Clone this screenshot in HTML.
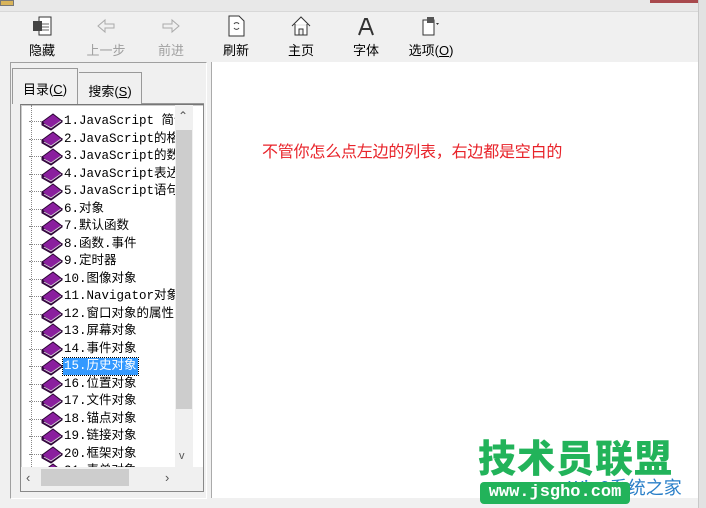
<!DOCTYPE html>
<html><head><meta charset="utf-8">
<style>
*{margin:0;padding:0;box-sizing:border-box}
body{width:706px;height:508px;overflow:hidden;background:#f0f0f0;position:relative;font-family:"Liberation Sans","Noto Sans CJK SC",sans-serif;font-size:13px;color:#000}
.abs{position:absolute}
.title{left:0;top:0;width:706px;height:12px;background:#e8e8e8;border-bottom:1px solid #d8d8d8}
.tb{top:15px;text-align:center;width:50px;font-size:13px}
.tb svg{display:block;margin:0 auto 3px}
.dis{color:#a0a0a0}
.left{left:10px;top:62px;width:197px;height:437px;border:1px solid #a0a0a0;border-right-color:#fff;border-bottom-color:#fff;background:#f0f0f0}
.tab{top:72px;height:32px;border:1px solid #999;border-bottom:none;background:#f0f0f0;font-size:13px;padding:6px 0 0 0;text-align:center}
.tree{left:20px;top:104px;width:184px;height:388px;border:1px solid #888;border-top-color:#777;background:#fff;overflow:hidden;box-shadow:inset 1px 1px 0 #ccc}
.row{position:absolute;left:0;height:17px;white-space:nowrap;font-family:"Liberation Mono","Noto Sans CJK SC",monospace;font-size:12.5px;line-height:17px}
.row .d{position:absolute;left:8px;top:8px;width:14px;border-top:1px dotted #888}
.row .b{position:absolute;left:19px;top:0px;width:23px;height:18px}
.row .t{position:absolute;left:42px;top:0;padding:0 1px}
.sel{background:#3399ff;color:#fff;outline:1px dotted #000}
.right{left:211px;top:62px;width:487px;height:436px;background:#fff;border-left:1px solid #aaa}
</style></head><body>
<div class="abs title"></div>
<div class="abs" style="left:0;top:0;width:14px;height:6px;background:#d9b45a;border:1px solid #777"></div>
<div class="abs" style="left:650px;top:0;width:48px;height:3px;background:#a8494d"></div>
<div class="abs" style="left:698px;top:0;width:8px;height:508px;background:#e2e2e2;border-left:1px solid #c8c8c8"></div>

<div class="abs tb" style="left:17px"><svg width="22" height="22"><rect x="8" y="2" width="12" height="18" fill="#fff" stroke="#333"/><rect x="2" y="6" width="9" height="10" fill="#444"/><path d="M11 9h7M11 12h7M11 15h7" stroke="#666"/></svg>隐藏</div>
<div class="abs tb dis" style="left:81px"><svg width="22" height="22"><path d="M3 11l7-6v4h9v4h-9v4z" fill="none" stroke="#aaa"/></svg>上一步</div>
<div class="abs tb dis" style="left:146px"><svg width="22" height="22"><path d="M19 11l-7-6v4H3v4h9v4z" fill="none" stroke="#aaa"/></svg>前进</div>
<div class="abs tb" style="left:211px"><svg width="22" height="22"><path d="M4 1h10l5 5v15H4z" fill="#fff" stroke="#333"/><path d="M9 9a3 3 0 0 1 5 0M14 13a3 3 0 0 1-5 0" stroke="#444" fill="none"/></svg>刷新</div>
<div class="abs tb" style="left:276px"><svg width="22" height="22"><path d="M2 11L11 2l9 9M5 9v11h12V9M9 20v-6h4v6" fill="#fff" stroke="#333"/></svg>主页</div>
<div class="abs tb" style="left:341px"><svg width="22" height="22"><path d="M4 20L10 4h2l6 16M7 14h9" stroke="#333" stroke-width="2" fill="none"/></svg>字体</div>
<div class="abs tb" style="left:402px;width:58px"><svg width="22" height="22"><rect x="3" y="5" width="11" height="15" fill="#fff" stroke="#333"/><rect x="7" y="2" width="7" height="6" fill="#555"/><path d="M16 8l3 0-1.5 2z" fill="#333"/></svg>选项(<u>O</u>)</div>

<div class="abs left"></div>
<div class="abs tab" style="left:12px;top:68px;height:36px;width:66px;border-bottom:none;z-index:2;padding-top:10px">目录(<u>C</u>)</div>
<div class="abs tab" style="left:79px;width:63px;padding-top:8px;border-left:none">搜索(<u>S</u>)</div>
<div class="abs" style="left:142px;top:103px;width:62px;border-top:1px solid #999"></div>

<div class="abs tree">
<div class="abs" style="left:10px;top:0;height:384px;border-left:1px dotted #888"></div>
<div id="rows"></div>
<div class="abs" style="left:154px;top:0;width:18px;height:362px;background:#f0f0f0"></div>
<div class="abs" style="left:155px;top:25px;width:16px;height:279px;background:#cdcdcd"></div>
<div class="abs" style="left:157px;top:4px;font-size:12px;color:#555">⌃</div>
<div class="abs" style="left:158px;top:345px;font-size:11px;color:#555">v</div>
<div class="abs" style="left:0;top:362px;width:184px;height:24px;background:#f0f0f0"></div>
<div class="abs" style="left:20px;top:364px;width:88px;height:17px;background:#cdcdcd"></div>
<div class="abs" style="left:5px;top:365px;font-size:13px;color:#555">‹</div>
<div class="abs" style="left:144px;top:365px;font-size:13px;color:#555">›</div>
</div>

<div class="abs right"></div>
<div class="abs" style="left:262px;top:138px;color:#e8232a;font-size:16px;letter-spacing:-0.2px;font-family:'Noto Sans CJK SC',sans-serif">不管你怎么点左边的列表，右边都是空白的</div>

<div class="abs" style="left:478px;top:436px;font-size:38px;font-weight:900;color:#22b35a;letter-spacing:1px;line-height:40px;font-family:'Noto Sans CJK SC',sans-serif">技术员联盟</div>
<div class="abs" style="left:568px;top:474px;font-size:18px;color:#2a7fc8;font-family:'Noto Sans CJK SC',sans-serif">Win8系统之家</div>
<div class="abs" style="left:480px;top:482px;width:150px;height:22px;background:#22b35a;border-radius:4px;color:#fff;font-family:'Liberation Mono',monospace;font-weight:bold;font-size:17px;line-height:22px;text-align:center">www.jsgho.com</div>

<script>
var items=["1.JavaScript 简介","2.JavaScript的格式","3.JavaScript的数据","4.JavaScript表达式","5.JavaScript语句","6.对象","7.默认函数","8.函数.事件","9.定时器","10.图像对象","11.Navigator对象","12.窗口对象的属性","13.屏幕对象","14.事件对象","15.历史对象","16.位置对象","17.文件对象","18.锚点对象","19.链接对象","20.框架对象","21.表单对象"];
var h="";
for(var i=0;i<items.length;i++){
var y=8+i*17.5;
h+='<div class="row" style="top:'+y+'px;width:154px"><div class="d"></div><svg class="b" viewBox="0 0 23 18"><path d="M2 9L13 1l9 7-11 8z" fill="#8a1f9e" stroke="#2a0533" stroke-width="1"/><path d="M2 9v3l9 5 11-8V8l-11 8z" fill="#4a0a58" stroke="#2a0533" stroke-width="1"/><path d="M4 11l7 4 10-7" stroke="#ddd" stroke-width="0.8" fill="none"/></svg><span class="t'+(i==14?' sel':'')+'">'+items[i]+'</span></div>';
}
document.getElementById("rows").innerHTML=h;
</script>
</body></html>
